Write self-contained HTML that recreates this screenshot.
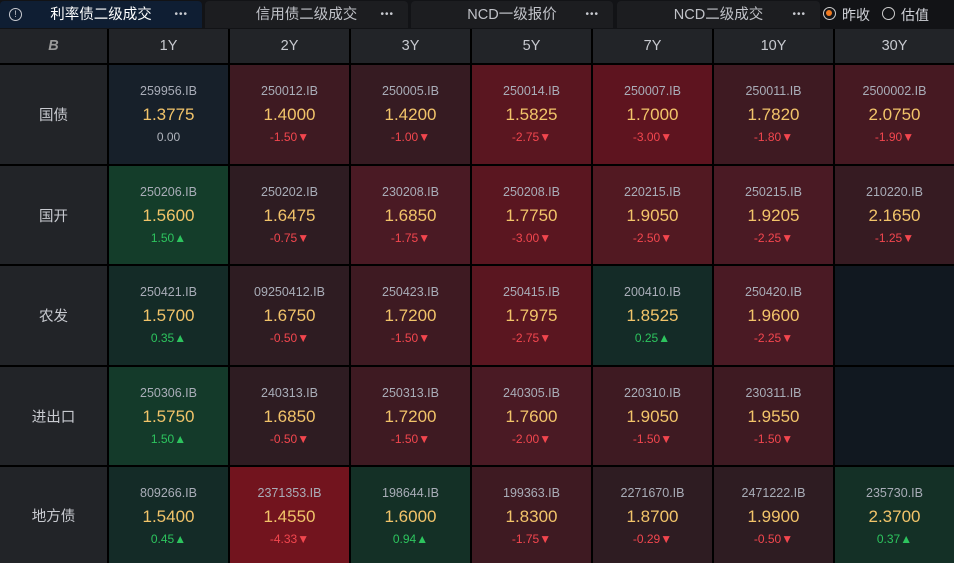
<!DOCTYPE html>
<html><head><meta charset="utf-8"><style>
*{margin:0;padding:0;box-sizing:border-box}
body{width:954px;height:563px;background:#000;overflow:hidden;font-family:"Liberation Sans","Noto Sans CJK SC",sans-serif;position:relative}
.tabs{position:absolute;left:0;top:0;width:954px;height:29px;background:#121316}
.tab{position:absolute;top:1px;height:27px;background:#1c1d20;border-radius:4px 4px 0 0;color:#c0c2c8;font-size:14.5px;line-height:28px}
.tab .t{position:absolute;left:0;right:0;text-align:center}
.tab .d{position:absolute;right:14px;top:0;font-size:10px;letter-spacing:1px;color:#c8cad0}
.grid{position:absolute;left:0;top:29px;display:grid;grid-template-columns:107px repeat(7,119px);grid-template-rows:34px 99px 98px 99px 98px 96px;column-gap:2px;row-gap:2px}
.h{background:#222428;color:#c8cad0;font-size:14.5px;display:flex;align-items:center;justify-content:center}
.l{background:#222428;color:#c8cad0;font-size:14.5px;display:flex;align-items:center;justify-content:center}
.c{position:relative;text-align:center}
.c .a{position:absolute;top:19px;left:0;right:0;font-size:12.5px;color:#a9adb8}
.c .v{position:absolute;top:40px;left:0;right:0;font-size:17px;color:#f2c46a}
.c .g{position:absolute;top:65px;left:0;right:0;font-size:12px}
.r{color:#f2464e}.gr{color:#2dc45e}.n{color:#b0b4bc}
.B{background:#17202a}.G1{background:#142b27}.G2{background:#143d2a}.G3{background:#143026}
.R1{background:#2e1c22}.R2{background:#3e1a22}.R3{background:#4a1a24}.R4{background:#5a1620}.R5{background:#72141e}.E{background:#111820}
</style></head><body>
<div class="tabs">
<div class="tab" style="left:0;width:202px;background:#0f1e33;color:#fff"><span style="position:absolute;left:9px;top:7px;width:13px;height:13px;border:1.5px solid #c8cad0;border-radius:50%;font-size:9px;line-height:10px;text-align:center;color:#c8cad0">!</span><span class="t" style="color:#fff">利率债二级成交</span><span class="d">•••</span></div>
<div class="tab" style="left:205px;width:203px"><span class="t">信用债二级成交</span><span class="d">•••</span></div>
<div class="tab" style="left:411px;width:202px"><span class="t">NCD一级报价</span><span class="d">•••</span></div>
<div class="tab" style="left:617px;width:203px"><span class="t">NCD二级成交</span><span class="d">•••</span></div>
<div style="position:absolute;left:823px;top:7px;width:13px;height:13px;border:1.5px solid #ccc;border-radius:50%"><div style="position:absolute;left:2px;top:2px;width:6px;height:6px;border-radius:50%;background:#f07a20"></div></div>
<span style="position:absolute;left:842px;top:5px;color:#d0d2d8;font-size:14px">昨收</span>
<div style="position:absolute;left:882px;top:7px;width:13px;height:13px;border:1.5px solid #ccc;border-radius:50%"></div>
<span style="position:absolute;left:901px;top:5px;color:#d0d2d8;font-size:14px">估值</span>
</div>
<div class="grid">
<div class="h" style="color:#999;font-weight:bold;font-style:italic">B</div><div class="h">1Y</div><div class="h">2Y</div><div class="h">3Y</div><div class="h">5Y</div><div class="h">7Y</div><div class="h">10Y</div><div class="h">30Y</div>

<div class="l">国债</div>
<div class="c B"><div class="a">259956.IB</div><div class="v">1.3775</div><div class="g n">0.00</div></div>
<div class="c R2"><div class="a">250012.IB</div><div class="v">1.4000</div><div class="g r">-1.50▼</div></div>
<div class="c R1" style="background:#361b22"><div class="a">250005.IB</div><div class="v">1.4200</div><div class="g r">-1.00▼</div></div>
<div class="c R4"><div class="a">250014.IB</div><div class="v">1.5825</div><div class="g r">-2.75▼</div></div>
<div class="c R4" style="background:#5e141f"><div class="a">250007.IB</div><div class="v">1.7000</div><div class="g r">-3.00▼</div></div>
<div class="c R2"><div class="a">250011.IB</div><div class="v">1.7820</div><div class="g r">-1.80▼</div></div>
<div class="c R3" style="background:#461922"><div class="a">2500002.IB</div><div class="v">2.0750</div><div class="g r">-1.90▼</div></div>

<div class="l">国开</div>
<div class="c G2"><div class="a">250206.IB</div><div class="v">1.5600</div><div class="g gr">1.50▲</div></div>
<div class="c R1"><div class="a">250202.IB</div><div class="v">1.6475</div><div class="g r">-0.75▼</div></div>
<div class="c R3"><div class="a">230208.IB</div><div class="v">1.6850</div><div class="g r">-1.75▼</div></div>
<div class="c R4"><div class="a">250208.IB</div><div class="v">1.7750</div><div class="g r">-3.00▼</div></div>
<div class="c R3" style="background:#521922"><div class="a">220215.IB</div><div class="v">1.9050</div><div class="g r">-2.50▼</div></div>
<div class="c R3"><div class="a">250215.IB</div><div class="v">1.9205</div><div class="g r">-2.25▼</div></div>
<div class="c R2" style="background:#361b22"><div class="a">210220.IB</div><div class="v">2.1650</div><div class="g r">-1.25▼</div></div>

<div class="l">农发</div>
<div class="c G1"><div class="a">250421.IB</div><div class="v">1.5700</div><div class="g gr">0.35▲</div></div>
<div class="c R1"><div class="a">09250412.IB</div><div class="v">1.6750</div><div class="g r">-0.50▼</div></div>
<div class="c R2"><div class="a">250423.IB</div><div class="v">1.7200</div><div class="g r">-1.50▼</div></div>
<div class="c R4"><div class="a">250415.IB</div><div class="v">1.7975</div><div class="g r">-2.75▼</div></div>
<div class="c G1"><div class="a">200410.IB</div><div class="v">1.8525</div><div class="g gr">0.25▲</div></div>
<div class="c R3"><div class="a">250420.IB</div><div class="v">1.9600</div><div class="g r">-2.25▼</div></div>
<div class="c E"></div>

<div class="l">进出口</div>
<div class="c G2" style="background:#143a2a"><div class="a">250306.IB</div><div class="v">1.5750</div><div class="g gr">1.50▲</div></div>
<div class="c R1"><div class="a">240313.IB</div><div class="v">1.6850</div><div class="g r">-0.50▼</div></div>
<div class="c R2"><div class="a">250313.IB</div><div class="v">1.7200</div><div class="g r">-1.50▼</div></div>
<div class="c R3"><div class="a">240305.IB</div><div class="v">1.7600</div><div class="g r">-2.00▼</div></div>
<div class="c R2"><div class="a">220310.IB</div><div class="v">1.9050</div><div class="g r">-1.50▼</div></div>
<div class="c R2"><div class="a">230311.IB</div><div class="v">1.9550</div><div class="g r">-1.50▼</div></div>
<div class="c E"></div>

<div class="l">地方债</div>
<div class="c G1"><div class="a">809266.IB</div><div class="v">1.5400</div><div class="g gr">0.45▲</div></div>
<div class="c R5"><div class="a">2371353.IB</div><div class="v">1.4550</div><div class="g r">-4.33▼</div></div>
<div class="c G3"><div class="a">198644.IB</div><div class="v">1.6000</div><div class="g gr">0.94▲</div></div>
<div class="c R2"><div class="a">199363.IB</div><div class="v">1.8300</div><div class="g r">-1.75▼</div></div>
<div class="c R1"><div class="a">2271670.IB</div><div class="v">1.8700</div><div class="g r">-0.29▼</div></div>
<div class="c R1"><div class="a">2471222.IB</div><div class="v">1.9900</div><div class="g r">-0.50▼</div></div>
<div class="c G3"><div class="a">235730.IB</div><div class="v">2.3700</div><div class="g gr">0.37▲</div></div>
</div>
</body></html>
